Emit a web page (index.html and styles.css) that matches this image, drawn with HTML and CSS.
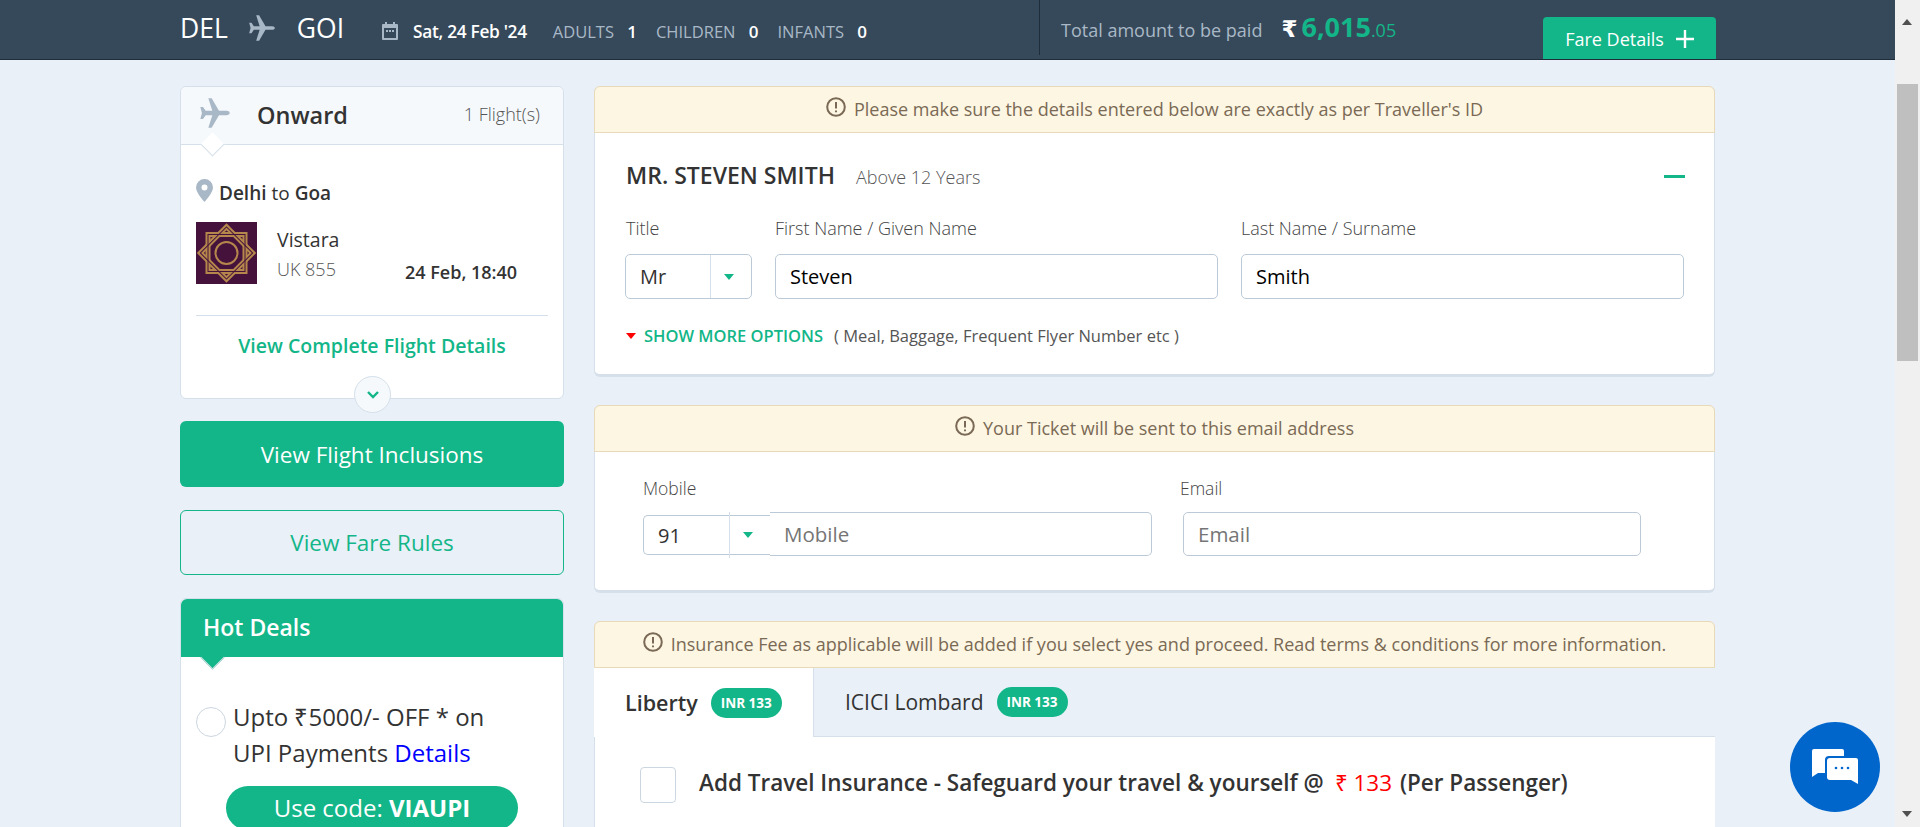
FILE: index.html
```html
<!DOCTYPE html>
<html lang="en">
    <head>
        <meta charset="utf-8">
        <title>Review Booking</title>
        <link rel="stylesheet" href="styles.css">
    </head>
    <body>
        <div class="page">
            <header class="topbar">
                <div class="route">
                    <span class="city">DEL</span>
                    <svg class="plane-top" viewBox="0 0 24 24"><path d="M23 12c0-1-1-1.6-2.5-1.6H15L9.5 1H7l3 9.4H5L3 7.5H1L2.2 12 1 16.5h2L5 13.6h5L7 23h2.5L15 13.6h5.5C22 13.6 23 13 23 12z"/></svg>
                    <span class="city">GOI</span>
                </div>
                <svg class="cal" viewBox="0 0 16 18"><path d="M3 0h2v2h6V0h2v2h2a1 1 0 0 1 1 1v14a1 1 0 0 1-1 1H1a1 1 0 0 1-1-1V3a1 1 0 0 1 1-1h2zM2 6v10h12V6z" fill-rule="evenodd"/><rect x="4" y="8" width="2" height="2"/><rect x="7" y="8" width="2" height="2"/><rect x="10" y="8" width="2" height="2"/></svg>
                <span class="trip-date">Sat, 24 Feb '24</span>
                <span class="pax">ADULTS <b>1</b></span>
                <span class="pax">CHILDREN <b>0</b></span>
                <span class="pax">INFANTS <b>0</b></span>
                <div class="total">
                    <span class="total-label">Total amount to be paid</span>
                    <span class="rupee">₹</span><span class="amount">6,015<small>.05</small></span>
                </div>
                <button class="fare-btn">Fare Details <svg viewBox="0 0 18 18"><path d="M9 0v18M0 9h18"/></svg></button>
            </header>

            <div class="content">
                <aside class="side">
                    <section class="flight-card">
                        <div class="flight-head">
                            <svg class="plane-side" viewBox="0 0 24 24"><path d="M23 12c0-1-1-1.6-2.5-1.6H15L9.5 1H7l3 9.4H5L3 7.5H1L2.2 12 1 16.5h2L5 13.6h5L7 23h2.5L15 13.6h5.5C22 13.6 23 13 23 12z"/></svg>
                            <span class="onward">Onward</span>
                            <span class="flight-count">1 Flight(s)</span>
                        </div>
                        <div class="flight-body">
                            <div class="cities">
                                <svg class="pin" viewBox="0 0 17 23"><path fill-rule="evenodd" d="M8.5 0A8.5 8.5 0 0 0 0 8.5C0 14 8.5 23 8.5 23S17 14 17 8.5A8.5 8.5 0 0 0 8.5 0zm0 5.5a3 3 0 1 1 0 6 3 3 0 0 1 0-6z"/></svg>
                                <span><b>Delhi</b> to <b>Goa</b></span>
                            </div>
                            <div class="airline">
                                <svg class="logo" viewBox="0 0 61 62">
                                    <rect width="61" height="62" fill="#45123b"/>
                                    <g fill="none" stroke="#b5874c" stroke-width="5">
                                        <rect x="12" y="12.5" width="37" height="37"/>
                                        <rect x="12" y="12.5" width="37" height="37" transform="rotate(45 30.5 31)"/>
                                    </g>
                                    <g fill="none" stroke="#45123b" stroke-width="1">
                                        <rect x="12" y="12.5" width="37" height="37"/>
                                        <rect x="12" y="12.5" width="37" height="37" transform="rotate(45 30.5 31)"/>
                                    </g>
                                    <circle cx="30.5" cy="31" r="11" fill="#45123b" stroke="#b5874c" stroke-width="2"/>
                                </svg>
                                <div class="airline-name">
                                    <div>Vistara</div>
                                    <div class="flight-no">UK 855</div>
                                </div>
                                <div class="depart">24 Feb, 18:40</div>
                            </div>
                            <a class="complete-link" href="#">View Complete Flight Details</a>
                        </div>
                        <span class="more-circle"><svg viewBox="0 0 12 8"><path d="M1 1l5 5 5-5"/></svg></span>
                    </section>

                    <button class="btn-solid">View Flight Inclusions</button>
                    <button class="btn-outline">View Fare Rules</button>

                    <section class="deals">
                        <h3 class="deals-head">Hot Deals</h3>
                        <div class="deal">
                            <span class="radio"></span>
                            <p>Upto ₹5000/- OFF * on<br>UPI Payments <a href="#">Details</a></p>
                        </div>
                        <div class="code-pill">Use code: <b>VIAUPI</b></div>
                    </section>
                </aside>

                <main class="main">
                    <section class="panel">
                        <div class="notice">
                            <svg class="alert" viewBox="0 0 20 20"><circle cx="10" cy="10" r="8.8"/><path d="M10 5v6.5M10 13.6v1.6"/></svg>
                            Please make sure the details entered below are exactly as per Traveller's ID
                        </div>
                        <div class="traveller">
                            <div class="traveller-head">
                                <span class="traveller-name">MR. STEVEN SMITH</span>
                                <span class="traveller-age">Above 12 Years</span>
                                <span class="collapse"></span>
                            </div>
                            <div class="name-row">
                                <label class="field field-title">
                                    <span class="label">Title</span>
                                    <span class="select"><span class="select-val">Mr</span><span class="select-arrow"></span></span>
                                </label>
                                <label class="field field-first">
                                    <span class="label">First Name / Given Name</span>
                                    <span class="input strong">Steven</span>
                                </label>
                                <label class="field field-last">
                                    <span class="label">Last Name / Surname</span>
                                    <span class="input strong">Smith</span>
                                </label>
                            </div>
                            <div class="more-options">
                                <span class="red-caret"></span>
                                <a href="#">SHOW MORE OPTIONS</a>
                                <span class="more-note">( Meal, Baggage, Frequent Flyer Number etc )</span>
                            </div>
                        </div>
                    </section>

                    <section class="panel">
                        <div class="notice">
                            <svg class="alert" viewBox="0 0 20 20"><circle cx="10" cy="10" r="8.8"/><path d="M10 5v6.5M10 13.6v1.6"/></svg>
                            Your Ticket will be sent to this email address
                        </div>
                        <div class="contact">
                            <div class="field field-mobile">
                                <span class="label">Mobile</span>
                                <div class="mobile-row">
                                    <span class="select select-code"><span class="select-val">91</span><span class="select-arrow"></span></span>
                                    <span class="input hint input-mobile">Mobile</span>
                                </div>
                            </div>
                            <div class="field field-email">
                                <span class="label">Email</span>
                                <span class="input hint">Email</span>
                            </div>
                        </div>
                    </section>

                    <section class="insurance">
                        <div class="notice">
                            <svg class="alert" viewBox="0 0 20 20"><circle cx="10" cy="10" r="8.8"/><path d="M10 5v6.5M10 13.6v1.6"/></svg>
                            Insurance Fee as applicable will be added if you select yes and proceed. Read terms &amp; conditions for more information.
                        </div>
                        <div class="tabs">
                            <div class="tab active">Liberty <span class="badge">INR 133</span></div>
                            <div class="tab">ICICI Lombard <span class="badge">INR 133</span></div>
                        </div>
                        <div class="insurance-body">
                            <span class="checkbox"></span>
                            <span class="insurance-text">Add Travel Insurance - Safeguard your travel &amp; yourself @ <em>₹ 133</em> (Per Passenger)</span>
                        </div>
                    </section>
                </main>
            </div>

            <button class="chat-btn">
                <svg viewBox="0 0 48 36">
                    <path d="M3 0h28a2 2 0 0 1 2 2v5H18a4 4 0 0 0-4 4v13H7l-6 4V2a2 2 0 0 1 2-2z" fill="#fff"/>
                    <path d="M19 9h26a2 2 0 0 1 2 2v24l-7-4H19a3 3 0 0 1-3-3V12a3 3 0 0 1 3-3z" fill="#fff"/>
                    <circle cx="25" cy="19" r="1.3" fill="#0066cc"/><circle cx="31" cy="19" r="1.3" fill="#0066cc"/><circle cx="37" cy="19" r="1.3" fill="#0066cc"/>
                </svg>
            </button>
        </div>

        <div class="scrollbar">
            <span class="arrow-up"></span>
            <span class="thumb"></span>
            <span class="arrow-down"></span>
        </div>
    </body>
</html>
```
FILE: styles.css
```css
html, body {
    margin: 0;
    height: 827px;
    overflow: hidden;
}

body {
    display: flex;
    font-family: "Open Sans", sans-serif;
    color: #333;
    background-color: #e9f0f8;
}

.page {
    flex: 1;
    min-width: 0;
    height: 827px;
    overflow: hidden;
}

/* top bar */
.topbar {
    display: flex;
    align-items: center;
    box-sizing: border-box;
    height: 60px;
    padding: 0 179px 0 180px;
    background-color: #36495a;
    border-bottom: 1px solid #1e2d39;
    color: #fff;
}

.route {
    display: flex;
    align-items: center;
    margin-top: -4px;
}

.city {
    font-size: 26.5px;
    line-height: 36px;
}

.plane-top {
    width: 28px;
    height: 28px;
    margin: 0 21px 0 20px;
    fill: #a9b8c6;
}

.cal {
    width: 16px;
    height: 18px;
    margin: 2px 15px 0 38px;
    fill: #a9b8c6;
}

.trip-date {
    font-size: 17.3px;
    font-weight: 600;
    letter-spacing: -0.3px;
    margin-top: 3px;
    margin-right: 26px;
}

.pax {
    font-size: 16.5px;
    color: #a9b8c6;
    margin-top: 3px;
    margin-right: 19px;
    white-space: nowrap;
}

.pax b {
    margin-left: 9px;
    font-size: 17px;
    font-weight: 600;
    color: #fff;
}

.total {
    display: flex;
    align-items: baseline;
    align-self: flex-start;
    box-sizing: border-box;
    height: 55px;
    margin-left: 153px;
    padding: 12px 0 0 21px;
    border-left: 1px solid #1e2d39;
}

.total-label {
    font-size: 18px;
    color: #a9b8c6;
    margin-right: 19px;
}

.rupee {
    font-family: "DejaVu Sans", sans-serif;
    font-size: 23px;
    font-weight: 700;
    margin-right: 4px;
}

.amount {
    font-size: 27px;
    font-weight: 700;
    line-height: 30px;
    color: #13b688;
}

.amount small {
    font-size: 18px;
    font-weight: 400;
}

.fare-btn {
    display: flex;
    align-items: center;
    justify-content: center;
    gap: 12px;
    width: 173px;
    height: 42px;
    margin-top: 17px;
    margin-left: auto;
    padding: 2px 0 0;
    border: none;
    border-radius: 4px 4px 0 0;
    background-color: #13b688;
    color: #fff;
    font-family: inherit;
    font-size: 18px;
}

.fare-btn svg {
    width: 18px;
    height: 18px;
    fill: none;
    stroke: #fff;
    stroke-width: 2.4;
}

/* columns */
.content {
    display: flex;
    gap: 30px;
    width: 1536px;
    margin-left: 180px;
    padding-top: 26px;
}

.side {
    flex: 0 0 384px;
}

.main {
    flex: 0 0 1121px;
}

/* flight card */
.flight-card {
    position: relative;
    box-sizing: border-box;
    height: 313px;
    margin-bottom: 22px;
    background-color: #fff;
    border: 1px solid #d5e0ea;
    border-radius: 6px;
}

.flight-head {
    position: relative;
    display: flex;
    align-items: center;
    height: 57px;
    padding: 0 23px 0 18px;
    background-color: #f5f9fc;
    border-bottom: 1px solid #d5e0ea;
    border-radius: 6px 6px 0 0;
}

.flight-head::after {
    content: "";
    position: absolute;
    left: 23px;
    bottom: -9px;
    width: 16px;
    height: 16px;
    background-color: #fff;
    border-right: 1px solid #d5e0ea;
    border-bottom: 1px solid #d5e0ea;
    transform: rotate(45deg);
}

.plane-side {
    width: 32px;
    height: 32px;
    margin: -5px 0 0 0;
    fill: #a9b8c6;
}

.onward {
    margin-left: 26px;
    margin-top: -1px;
    font-size: 23.5px;
    font-weight: 600;
}

.flight-count {
    margin-left: auto;
    margin-top: -3px;
    font-size: 18px;
    font-weight: 300;
    color: #555;
}

.flight-body {
    padding: 36px 15px 0;
}

.cities {
    display: flex;
    align-items: center;
    gap: 6px;
    height: 24px;
    font-size: 19px;
}

.cities b {
    font-weight: 600;
}

.pin {
    width: 17px;
    height: 23px;
    margin-top: -6px;
    fill: #a9b8c6;
}

.airline {
    display: flex;
    align-items: flex-start;
    margin-top: 17px;
    padding-bottom: 31px;
    border-bottom: 1px solid #d5e0ea;
}

.logo {
    flex: 0 0 61px;
    width: 61px;
    height: 62px;
}

.airline-name {
    margin: 5px 0 0 20px;
    width: 128px;
    font-size: 19.5px;
    line-height: 26px;
}

.flight-no {
    margin-top: 3px;
    font-size: 18px;
    font-weight: 300;
    color: #555;
}

.depart {
    margin-top: 38px;
    font-size: 18px;
    font-weight: 600;
    line-height: 24px;
    white-space: nowrap;
}

.complete-link {
    display: block;
    margin-top: 16px;
    text-align: center;
    font-size: 19.5px;
    font-weight: 600;
    color: #13b688;
    text-decoration: none;
}

.more-circle {
    position: absolute;
    left: 173px;
    bottom: -15px;
    display: flex;
    align-items: center;
    justify-content: center;
    box-sizing: border-box;
    width: 37px;
    height: 37px;
    background-color: #f5f9fc;
    border: 1px solid #d5e0ea;
    border-radius: 50%;
}

.more-circle svg {
    width: 12px;
    height: 8px;
    fill: none;
    stroke: #13b688;
    stroke-width: 2.4;
}

/* side buttons */
.btn-solid,
.btn-outline {
    display: block;
    width: 384px;
    padding: 0;
    border-radius: 6px;
    font-family: inherit;
    font-size: 22.5px;
}

.btn-solid {
    height: 66px;
    margin-bottom: 23px;
    border: none;
    background-color: #13b688;
    color: #fff;
}

.btn-outline {
    height: 65px;
    margin-bottom: 23px;
    border: 1px solid #13b688;
    background-color: transparent;
    color: #13b688;
}

/* deals */
.deals {
    background-color: #fff;
    border: 1px solid #d5e0ea;
    border-radius: 6px 6px 0 0;
    padding-bottom: 20px;
}

.deals-head {
    position: relative;
    box-sizing: border-box;
    height: 58px;
    margin: 0 0 48px;
    padding: 0 22px;
    background-color: #13b688;
    border-radius: 6px 6px 0 0;
    color: #fff;
    font-size: 23px;
    font-weight: 600;
    line-height: 56px;
}

.deals-head::after {
    content: "";
    position: absolute;
    left: 23px;
    bottom: -9px;
    width: 16px;
    height: 16px;
    background-color: #13b688;
    border-right: 1px solid #d5e0ea;
    border-bottom: 1px solid #d5e0ea;
    transform: rotate(45deg);
}

.deal {
    display: flex;
    padding: 0 20px 0 15px;
}

.radio {
    flex: 0 0 30px;
    box-sizing: border-box;
    height: 30px;
    margin: 2px 7px 0 0;
    border: 1px solid #ccd6e0;
    border-radius: 50%;
}

.deal p {
    margin: -6px 0 0;
    font-size: 24px;
    line-height: 36px;
}

.deal a {
    color: #00f;
    text-decoration: none;
}

.code-pill {
    width: 292px;
    height: 44px;
    margin: 15px 0 0 45px;
    background-color: #13b688;
    border-radius: 22px;
    color: #fff;
    font-size: 24px;
    line-height: 44px;
    text-align: center;
}

.code-pill b {
    font-weight: 700;
}

/* main panels */
.panel {
    margin-bottom: 28px;
    background-color: #fff;
    border: 1px solid #d5e0ea;
    border-top: none;
    border-bottom: 3px solid #d5e0ea;
    border-radius: 6px;
}

.notice {
    display: flex;
    align-items: center;
    justify-content: center;
    gap: 8px;
    box-sizing: border-box;
    height: 47px;
    background-color: #fdf6e3;
    border: 1px solid #e8d9b8;
    border-radius: 6px 6px 0 0;
    font-size: 18px;
    color: #7a6a55;
    padding-bottom: 2px;
}

.panel .notice {
    margin: 0 -1px;
}

.alert {
    width: 20px;
    height: 20px;
    margin-top: -3px;
    fill: none;
    stroke: #7a6a55;
    stroke-width: 2;
}

.traveller {
    padding: 28px 29px 0 30px;
    height: 241px;
    box-sizing: border-box;
}

.traveller-head {
    display: flex;
    align-items: baseline;
    height: 29px;
    padding-left: 1px;
}

.traveller-name {
    font-size: 23px;
    font-weight: 600;
    line-height: 29px;
}

.traveller-age {
    margin-left: 21px;
    font-size: 18px;
    font-weight: 300;
    color: #555;
}

.collapse {
    width: 21px;
    height: 3px;
    margin-left: auto;
    background-color: #13b688;
    align-self: center;
    margin-top: 2px;
}

.field {
    display: block;
}

.label {
    display: block;
    font-size: 18px;
    font-weight: 300;
    line-height: 24px;
    color: #444;
}

.name-row {
    display: flex;
    margin-top: 26px;
}

.field-title {
    flex: 0 0 127px;
}

.field-title .label {
    margin-left: 1px;
}

.field-first {
    flex: 0 0 443px;
    margin-left: 23px;
}

.field-last {
    flex: 0 0 443px;
    margin-left: 23px;
}

.select,
.input {
    display: flex;
    align-items: center;
    box-sizing: border-box;
    height: 45px;
    margin-top: 14px;
    background-color: #fff;
    border: 1px solid #bccad7;
    border-radius: 5px;
    font-size: 20px;
}

.input {
    padding: 0 14px;
}

.strong {
    font-weight: 500;
    color: #000;
}

.hint {
    font-size: 20.5px;
    color: #757575;
}

.select-val {
    flex: 1;
    padding-left: 14px;
}

.select-arrow {
    position: relative;
    flex: 0 0 40px;
    height: 100%;
    border-left: 1px solid #d5e0ea;
}

.select-arrow::after {
    content: "";
    position: absolute;
    left: 13px;
    top: 19px;
    border-left: 5px solid transparent;
    border-right: 5px solid transparent;
    border-top: 6px solid #13b688;
}

.more-options {
    display: flex;
    align-items: center;
    margin-top: 25px;
    padding-left: 1px;
    font-size: 16.5px;
}

.red-caret {
    margin-right: 8px;
    border-left: 5px solid transparent;
    border-right: 5px solid transparent;
    border-top: 6px solid #f00;
}

.more-options a {
    font-weight: 600;
    color: #13b688;
    text-decoration: none;
}

.more-note {
    margin-left: 11px;
    color: #555;
}

.contact {
    display: flex;
    height: 138px;
    box-sizing: border-box;
    padding: 24px 0 0 48px;
}

.contact .label {
    font-size: 17.5px;
}

.field-mobile {
    width: 509px;
}

.field-email {
    width: 458px;
    margin-left: 31px;
}

.field-email .label {
    margin-left: -3px;
}

.contact .input {
    height: 44px;
    margin-top: 12px;
}

.mobile-row {
    display: flex;
    align-items: flex-start;
}

.select-code {
    flex: 0 0 127px;
    height: 40px;
    margin-top: 15px;
    border-right: none;
    border-radius: 5px 0 0 5px;
}

.select-code .select-arrow {
    flex-basis: 40px;
    height: 46px;
}

.select-code .select-arrow::after {
    top: 20px;
}

.input-mobile {
    flex: 1;
    border-left: none;
    border-radius: 0 5px 5px 0;
}

/* insurance */
.tabs {
    display: flex;
    height: 69px;
    box-sizing: border-box;
    border-bottom: 1px solid #d5e0ea;
}

.tab {
    display: flex;
    align-items: center;
    gap: 13px;
    box-sizing: border-box;
    font-size: 21px;
    color: #333;
}

.tab.active {
    width: 220px;
    height: 69px;
    padding-left: 31px;
    background-color: #fff;
    font-size: 21.5px;
    font-weight: 600;
    border-right: 1px solid #d5e0ea;
}

.tab:not(.active) {
    padding-left: 31px;
}

.badge {
    display: inline-block;
    width: 71px;
    height: 30px;
    border-radius: 15px;
    background-color: #13b688;
    color: #fff;
    font-size: 13.5px;
    font-weight: 700;
    line-height: 30px;
    text-align: center;
}

.insurance-body {
    display: flex;
    align-items: flex-start;
    height: 100px;
    padding: 30px 0 0 45px;
    background-color: #fff;
    border-left: 1px solid #d5e0ea;
}

.checkbox {
    flex: 0 0 36px;
    box-sizing: border-box;
    height: 36px;
    background-color: #fff;
    border: 1px solid #ccd6e0;
    border-radius: 4px;
}

.insurance-text {
    margin: 0 0 0 23px;
    font-size: 22.5px;
    font-weight: 600;
    white-space: nowrap;
}

.insurance-text em {
    margin: 0 2px 0 5px;
    font-style: normal;
    font-weight: 400;
    color: #f00;
}

/* chat */
.chat-btn {
    position: fixed;
    left: 1790px;
    top: 722px;
    display: flex;
    align-items: center;
    justify-content: center;
    width: 90px;
    height: 90px;
    padding: 0;
    border: none;
    border-radius: 50%;
    background-color: #0066cc;
}

.chat-btn svg {
    width: 48px;
    height: 36px;
}

/* scrollbar */
.scrollbar {
    position: relative;
    flex: 0 0 25px;
    height: 827px;
    background-color: #f0f0f0;
}

.thumb {
    position: absolute;
    left: 2px;
    top: 84px;
    width: 21px;
    height: 277px;
    background-color: #bfbfbf;
}

.arrow-up,
.arrow-down {
    position: absolute;
    left: 7px;
    border-left: 5px solid transparent;
    border-right: 5px solid transparent;
}

.arrow-up {
    top: 19px;
    border-bottom: 6px solid #505050;
}

.arrow-down {
    bottom: 10px;
    border-top: 6px solid #505050;
}
```
